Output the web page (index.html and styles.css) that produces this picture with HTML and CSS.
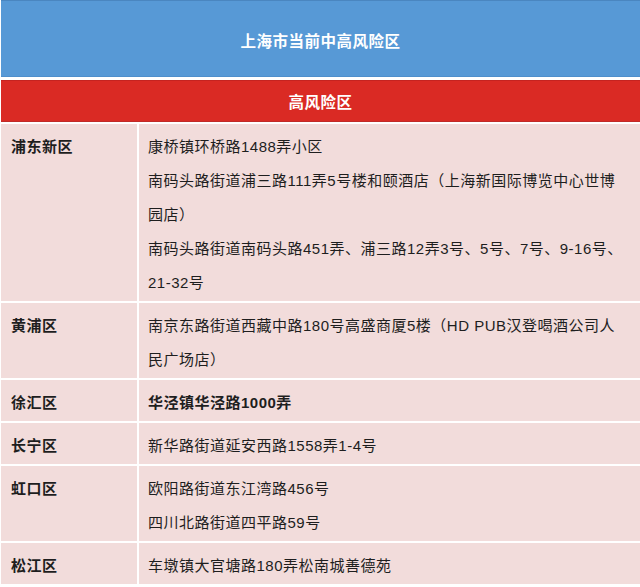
FILE: index.html
```html
<!DOCTYPE html>
<html lang="zh-CN">
<head>
<meta charset="utf-8">
<title>上海市当前中高风险区</title>
<link rel="stylesheet" href="styles.css">
</head>
<body>
<div class="sheet">
  <div class="title">上海市当前中高风险区</div>
  <div class="level">高风险区</div>
  <div class="rows">
    <div class="district">浦东新区</div>
    <div class="places">
      <p>康桥镇环桥路1488弄小区</p>
      <p>南码头路街道浦三路111弄5号楼和颐酒店（上海新国际博览中心世博园店）</p>
      <p>南码头路街道南码头路451弄、浦三路12弄3号、5号、7号、9-16号、21-32号</p>
    </div>
    <div class="district">黄浦区</div>
    <div class="places">
      <p>南京东路街道西藏中路180号高盛商厦5楼（HD PUB汉登喝酒公司人民广场店）</p>
    </div>
    <div class="district">徐汇区</div>
    <div class="places">
      <p class="strong">华泾镇华泾路1000弄</p>
    </div>
    <div class="district">长宁区</div>
    <div class="places">
      <p>新华路街道延安西路1558弄1-4号</p>
    </div>
    <div class="district">虹口区</div>
    <div class="places">
      <p>欧阳路街道东江湾路456号</p>
      <p>四川北路街道四平路59号</p>
    </div>
    <div class="district">松江区</div>
    <div class="places">
      <p>车墩镇大官塘路180弄松南城善德苑</p>
    </div>
  </div>
</div>
</body>
</html>
```

FILE: styles.css
```css
html, body {
  margin: 0;
  padding: 0;
  background: #ffffff;
}

body {
  font-family: "Liberation Sans", "Noto Sans CJK SC", sans-serif;
  font-size: 15px;
  letter-spacing: 0.5px;
  color: #1e1e1e;
}

.sheet {
  display: flex;
  flex-direction: column;
  padding-left: 1px;
}

.title {
  height: 75px;
  background: #5799d6;
  border-top: 1px solid #4a86c0;
  border-bottom: 1px solid #4f8fcc;
  color: #ffffff;
  font-weight: bold;
  font-size: 15.5px;
  display: flex;
  align-items: center;
  justify-content: center;
  padding-top: 3px;
  box-sizing: border-box;
  height: 77px;
}

.level {
  margin-top: 3px;
  height: 42px;
  box-sizing: border-box;
  background: #da2a24;
  border-top: 1px solid #c52320;
  border-bottom: 1px solid #c02a28;
  color: #ffffff;
  font-weight: bold;
  font-size: 15.5px;
  display: flex;
  align-items: center;
  justify-content: center;
}

.rows {
  margin-top: 2px;
  display: grid;
  grid-template-columns: 136px 1fr;
  gap: 2px;
}

.district,
.places {
  background: #f2dcdb;
  line-height: 34px;
  padding: 6px 0 1px;
}

.district {
  padding-left: 10px;
  font-weight: bold;
}

.places {
  padding-left: 9px;
  padding-right: 14px;
}

.places p {
  margin: 0;
}

.places .strong {
  font-weight: bold;
}
```
